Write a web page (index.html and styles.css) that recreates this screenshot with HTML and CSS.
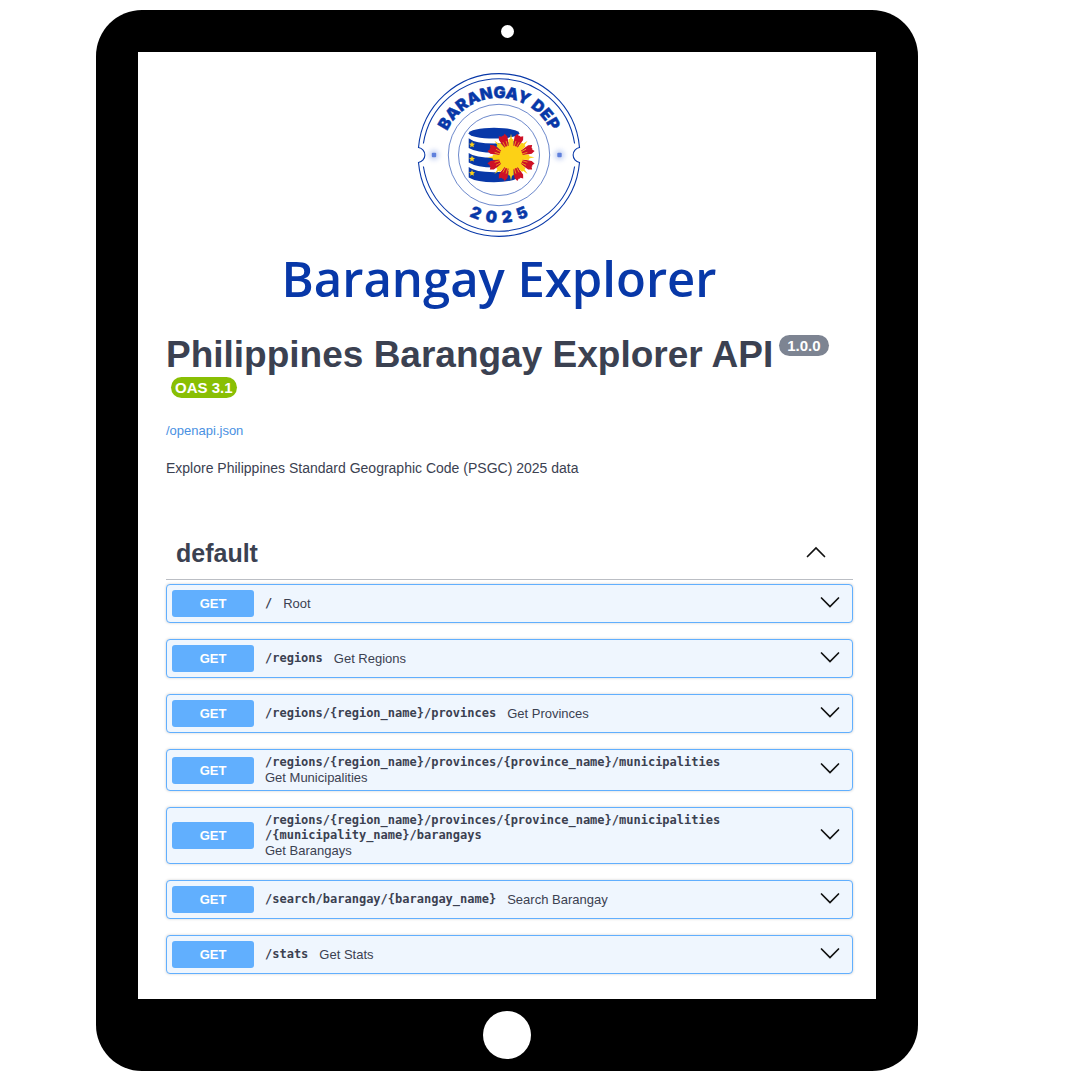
FILE: index.html
```html
<!DOCTYPE html>
<html lang="en">
<head>
<meta charset="utf-8">
<meta name="viewport" content="width=device-width, initial-scale=1">
<title>Barangay Explorer</title>
<link rel="stylesheet" href="styles.css">
</head>
<body>
<div class="device">
  <div class="device-top"><span class="camera"></span></div>
  <main class="screen">
    <header class="brand">
      <svg class="logo" viewBox="-82 -82 164 164" role="img" aria-label="Barangay DEP 2025">
        <defs>
          <path id="arc-top" d="M-57 0A57 57 0 0 1 57 0"/>
          <path id="arc-bottom" d="M-68 0A68 68 0 0 0 68 0"/>
          <filter id="glow" x="-200%" y="-200%" width="500%" height="500%"><feGaussianBlur stdDeviation="2.5"/></filter>
          <path id="star" d="M0-3L.9-1 3-.8 1.4.7 1.9 2.8 0 1.7-1.9 2.8-1.4.7-3-.8-.9-1Z"/>
          <g id="ray">
            <path fill="#ce1126" d="M-2.2-10L-4.6-20.5-3.2-24.2-.8-22.6 0-23.2.8-22.6 3.2-24.2 4.6-20.5 2.2-10Z"/>
            <path stroke="#fcd116" stroke-width=".6" d="M-1-10L-1.7-17M1-10L1.7-17"/>
          </g>
          <path id="beam" fill="#fcd116" d="M-2.2-9L-2.7-17.5-1.7-18.5-1.1-18 0-23.5 1.1-18 1.7-18.5 2.7-17.5 2.2-9Z"/>
        </defs>
        <g fill="none" stroke="#0838a8">
          <path stroke-width="1.1" d="M-80.5-7.5A80.8 80.8 0 0 1 80.5-7.5A7.6 7.6 0 0 0 80.5 7.5A80.8 80.8 0 0 1-80.5 7.5A7.6 7.6 0 0 0-80.5-7.5Z"/>
          <path stroke-width="1.1" d="M-75.6-11.5A76.5 76.5 0 0 1 75.6-11.5M75.6 11.5A76.5 76.5 0 0 1-75.6 11.5"/>
          <circle r="50.7" stroke-width=".6"/>
          <circle r="40.5" stroke-width=".6"/>
        </g>
        <g fill="#5f80dc">
          <circle cx="-65" r="5" opacity=".35" filter="url(#glow)"/>
          <circle cx="60.5" r="5" opacity=".35" filter="url(#glow)"/>
          <rect x="-67.2" y="-2.2" width="4.4" height="4.4" rx="1"/>
          <rect x="58.3" y="-2.2" width="4.4" height="4.4" rx="1"/>
        </g>
        <g class="logo-text">
          <text><textPath href="#arc-top" startOffset="50%">BARANGAY DEP</textPath></text>
          <text><textPath href="#arc-bottom" startOffset="50%">2&#160;&#160;0&#160;&#160;2&#160;&#160;5</textPath></text>
        </g>
        <g fill="#0838a8">
          <ellipse cx="-5" cy="-21.8" rx="25.3" ry="5.4"/>
          <path d="M-30.3-16.8Q-24-11.5-5-11.5T20-16.8V-7Q12-2.2-5-2.2T-30.3-7Z"/>
          <path d="M-30.3-2Q-24 2.8-5 2.8T20-2V7.5Q12 12.5-5 12.5T-30.3 7.5Z"/>
          <path d="M-30.3 12Q-24 17.2-5 17.2T20 12V22.5Q12 27.3-5 27.3T-30.3 22.5Z"/>
        </g>
        <g fill="#fcd116">
          <use href="#star" x="-27" y="-10.5"/><use href="#star" x="-27" y="3.8"/><use href="#star" x="-27" y="18"/>
        </g>
        <g transform="translate(12 2.3)">
          <use href="#ray" transform="rotate(22.5)"/><use href="#ray" transform="rotate(67.5)"/><use href="#ray" transform="rotate(112.5)"/><use href="#ray" transform="rotate(157.5)"/>
          <use href="#ray" transform="rotate(202.5)"/><use href="#ray" transform="rotate(247.5)"/><use href="#ray" transform="rotate(292.5)"/><use href="#ray" transform="rotate(337.5)"/>
          <use href="#beam"/><use href="#beam" transform="rotate(45)"/><use href="#beam" transform="rotate(90)"/><use href="#beam" transform="rotate(135)"/>
          <use href="#beam" transform="rotate(180)"/><use href="#beam" transform="rotate(225)"/><use href="#beam" transform="rotate(270)"/><use href="#beam" transform="rotate(315)"/>
          <circle r="11.8" fill="#fcd116"/>
        </g>
      </svg>
      <h1 class="brand-name">Barangay Explorer</h1>
    </header>

    <section class="info">
      <h2 class="api-title"><span>Philippines Barangay Explorer API</span><small class="badge">1.0.0</small><small class="badge badge-oas">OAS 3.1</small></h2>
      <a class="spec-link" href="#openapi">/openapi.json</a>
      <p class="description">Explore Philippines Standard Geographic Code (PSGC) 2025 data</p>
    </section>

    <section class="group">
      <h3 class="group-heading">
        <button class="group-toggle" type="button" aria-expanded="true">default
          <svg class="chevron" viewBox="0 0 20 20" aria-hidden="true"><path d="M1.5 13.5L10 5 18.5 13.5"/></svg>
        </button>
      </h3>
      <div class="operations">
        <button class="operation" type="button"><span class="method">GET</span><span class="summary"><code>/</code><span>Root</span></span><svg class="chevron" viewBox="0 0 20 20" aria-hidden="true"><path d="M1.5 4L10 12.5 18.5 4"/></svg></button>
        <button class="operation" type="button"><span class="method">GET</span><span class="summary"><code>/regions</code><span>Get Regions</span></span><svg class="chevron" viewBox="0 0 20 20" aria-hidden="true"><path d="M1.5 4L10 12.5 18.5 4"/></svg></button>
        <button class="operation" type="button"><span class="method">GET</span><span class="summary"><code>/regions/{region_name}/provinces</code><span>Get Provinces</span></span><svg class="chevron" viewBox="0 0 20 20" aria-hidden="true"><path d="M1.5 4L10 12.5 18.5 4"/></svg></button>
        <button class="operation" type="button"><span class="method">GET</span><span class="summary"><code>/regions/{region_name}/provinces/{province_name}/municipalities</code><span>Get Municipalities</span></span><svg class="chevron" viewBox="0 0 20 20" aria-hidden="true"><path d="M1.5 4L10 12.5 18.5 4"/></svg></button>
        <button class="operation" type="button"><span class="method">GET</span><span class="summary"><code>/regions/{region_name}/provinces/{province_name}/municipalities<wbr>/{municipality_name}/barangays</code><span>Get Barangays</span></span><svg class="chevron" viewBox="0 0 20 20" aria-hidden="true"><path d="M1.5 4L10 12.5 18.5 4"/></svg></button>
        <button class="operation" type="button"><span class="method">GET</span><span class="summary"><code>/search/barangay/{barangay_name}</code><span>Search Barangay</span></span><svg class="chevron" viewBox="0 0 20 20" aria-hidden="true"><path d="M1.5 4L10 12.5 18.5 4"/></svg></button>
        <button class="operation" type="button"><span class="method">GET</span><span class="summary"><code>/stats</code><span>Get Stats</span></span><svg class="chevron" viewBox="0 0 20 20" aria-hidden="true"><path d="M1.5 4L10 12.5 18.5 4"/></svg></button>
      </div>
    </section>
  </main>
  <div class="device-bottom"><button class="home" type="button" aria-label="Home"></button></div>
</div>
</body>
</html>
```
FILE: styles.css
```css
* {
  box-sizing: border-box;
}

body {
  margin: 0;
  padding: 10px 162px 9px 96px;
  background: #fff;
  color: #3b4151;
  font-family: "Liberation Sans", Arial, sans-serif;
}

h1, h2, h3, p {
  margin: 0;
}

button {
  border: 0;
  padding: 0;
  background: none;
  color: inherit;
  font: inherit;
  text-align: left;
  cursor: pointer;
}

/* Tablet frame */
.device {
  padding: 0 42px;
  border-radius: 46px;
  background: #000;
}

.device-top,
.device-bottom {
  display: flex;
  align-items: center;
  justify-content: center;
}

.device-top {
  height: 42px;
}

.device-bottom {
  height: 72px;
}

.camera {
  width: 13px;
  height: 13px;
  border-radius: 50%;
  background: #fff;
}

.home {
  width: 48px;
  height: 48px;
  border-radius: 50%;
  background: #fff;
}

.screen {
  padding: 21px 23px 25px 28px;
  background: #fff;
}

/* Branding */
.brand {
  display: flex;
  flex-direction: column;
  align-items: center;
  padding-right: 21px;
}

.logo {
  width: 164px;
  height: 164px;
}

.logo-text {
  fill: #0838a8;
  stroke: #0838a8;
  stroke-width: 0.4px;
  font: 900 16px Inter, sans-serif;
  text-anchor: middle;
}

.brand-name {
  margin-top: 8px;
  color: #0838a8;
  font: 600 49px/66px "Open Sans", sans-serif;
  white-space: nowrap;
}

/* API info */
.info {
  margin-top: 22px;
}

.api-title {
  display: flex;
  flex-wrap: wrap;
  align-items: flex-start;
  font-size: 37px;
  line-height: 44px;
  column-gap: 6px;
}

.badge {
  margin-top: 2px;
  padding: 0 8px;
  border-radius: 12px;
  background: #7d8492;
  color: #fff;
  font-size: 15px;
  line-height: 21px;
}

.badge-oas {
  margin: 0 5px;
  padding: 0 4px;
  background: #89bf04;
}

.spec-link {
  display: block;
  margin-top: 24px;
  color: #4990e2;
  font-size: 13px;
  line-height: 18px;
  text-decoration: none;
}

.description {
  margin-top: 18px;
  font-size: 14px;
  line-height: 20px;
}

/* Operation list */
.group {
  margin-top: 50px;
}

.group-heading {
  border-bottom: 1px solid #bbbec4;
  font-size: 25px;
  line-height: 30px;
}

.group-toggle {
  display: flex;
  align-items: center;
  justify-content: space-between;
  width: 100%;
  padding: 10px 27px 11px 10px;
}

.chevron {
  flex: none;
  width: 20px;
  height: 20px;
  fill: none;
  stroke: #111;
  stroke-width: 1.7;
  stroke-linecap: round;
}

.operations {
  display: flex;
  flex-direction: column;
  gap: 16px;
  padding-top: 4px;
}

.operation {
  display: flex;
  align-items: center;
  gap: 11px;
  min-height: 39px;
  padding: 5px 12px 5px 5px;
  border: 1px solid #61affe;
  border-radius: 4px;
  background: #eff6fe;
  box-shadow: 0 0 3px rgba(0, 0, 0, 0.19);
}

.method {
  flex: none;
  width: 82px;
  border-radius: 3px;
  background: #61affe;
  color: #fff;
  font-size: 13px;
  font-weight: 700;
  line-height: 27px;
  text-align: center;
}

.summary {
  display: flex;
  flex: 1;
  flex-wrap: wrap;
  align-items: center;
  column-gap: 11px;
  font-size: 13px;
  line-height: 15px;
}

.summary code {
  font-family: "DejaVu Sans Mono", monospace;
  font-size: 12px;
  font-weight: 700;
}
```
